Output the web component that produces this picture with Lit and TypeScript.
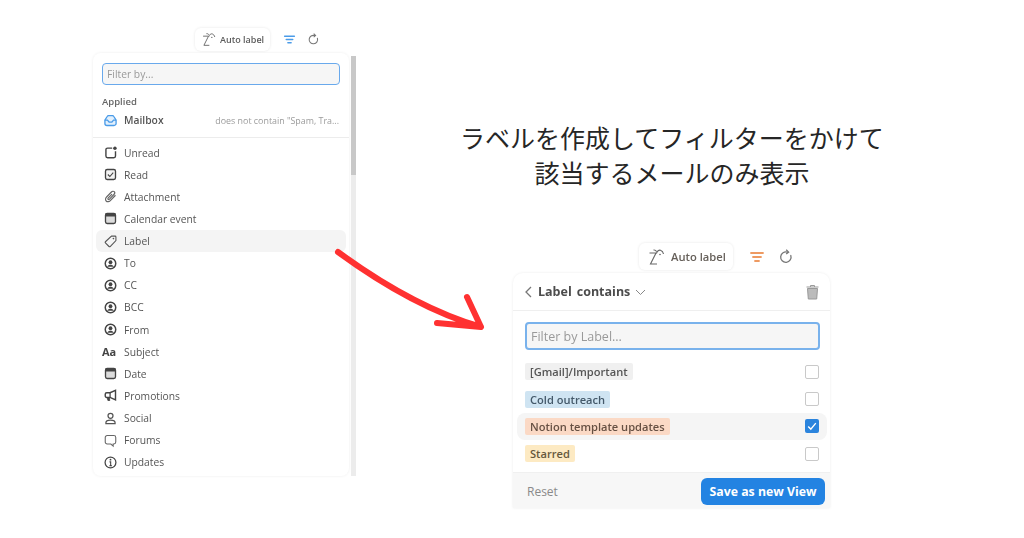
import { LitElement, css, html, svg } from "lit";
import { customElement } from "lit/decorators.js";

const icons: Record<string, any> = {
  unread: svg`<path d="M11 3.700H5.500a2 2 0 0 0-2 2v7.500a2 2 0 0 0 2 2H13a2 2 0 0 0 2-2V7.500" fill="none" stroke="#444" stroke-width="1.700"/><circle cx="14.300" cy="3.800" r="2.100" fill="#444"/>`,
  read: svg`<rect x="3" y="3" width="12" height="12" rx="2" fill="#f4f4f4" stroke="#444" stroke-width="1.600"/><path d="M5.800 9l2.400 2.400L12.300 6.800" fill="none" stroke="#444" stroke-width="1.300"/>`,
  clip: svg`<path d="M15 7.500l-6.200 6.400c-1.600 1.600-3.800 1.700-5 .5-1.200-1.200-1-3.300.5-4.800l5.800-6c1.100-1.100 2.600-1.200 3.400-.4.900.9.700 2.300-.4 3.400l-5.300 5.500c-.6.600-1.300.7-1.700.3-.4-.4-.3-1.100.3-1.700l4.400-4.600" fill="none" stroke="#666" stroke-width="1.400"/>`,
  calendar: svg`<rect x="3" y="3" width="12" height="12" rx="2" fill="#dcdcdc" stroke="#444" stroke-width="1.600"/><rect x="3" y="3" width="12" height="3.600" fill="#444"/>`,
  tag: svg`<path d="M10.200 2.500h4.300a1 1 0 0 1 1 1v4.300L8.600 15a1 1 0 0 1-1.400 0l-4.300-4.300a1 1 0 0 1 0-1.400z" fill="none" stroke="#555" stroke-width="1.300"/><circle cx="12.500" cy="5.500" r="1" fill="#555"/>`,
  person: svg`<circle cx="9" cy="9" r="6.300" fill="none" stroke="#444" stroke-width="1.800"/><circle cx="9" cy="7.500" r="2.300" fill="#444"/><path d="M4.800 13c1-2 2.500-2.600 4.200-2.600s3.200.6 4.200 2.600z" fill="#444"/>`,
  promo: svg`<path d="M15 2.800v11.400L8.500 11.300H4.500A1.800 1.800 0 0 1 2.700 9.500v-2A1.800 1.800 0 0 1 4.500 5.700h4z" fill="none" stroke="#444" stroke-width="1.700"/><path d="M8.500 5.700v5.600" stroke="#444" stroke-width="1.500"/><path d="M5 11.300l.9 3.700h2.200l-.6-3.700" fill="#444" stroke="#444" stroke-width="1"/>`,
  social: svg`<circle cx="9" cy="5.800" r="3" fill="none" stroke="#555" stroke-width="1.500"/><path d="M3.500 15.200v-1c0-2 2.200-3.200 5.500-3.200s5.500 1.200 5.500 3.200v1z" fill="none" stroke="#555" stroke-width="1.500"/>`,
  forum: svg`<path d="M5 3h8a2.300 2.300 0 0 1 2.300 2.300v5.600a2.300 2.300 0 0 1-2.300 2.300h-.8v2.500L9.400 13.200H5a2.300 2.300 0 0 1-2.300-2.300V5.300A2.300 2.300 0 0 1 5 3z" fill="none" stroke="#666" stroke-width="1.300"/>`,
  info: svg`<circle cx="9" cy="9" r="6.500" fill="none" stroke="#444" stroke-width="1.500"/><path d="M7.800 8.200H9.200v4.600M7.600 12.800h3.200" fill="none" stroke="#444" stroke-width="1.300"/><circle cx="9" cy="5.600" r="1.100" fill="#444"/>`,
  mail: svg`<path d="M2.300 8.500L5 4.200A2 2 0 0 1 6.700 3.200h4.600A2 2 0 0 1 13 4.200l2.700 4.300v4a2.500 2.500 0 0 1-2.500 2.500H4.800a2.500 2.500 0 0 1-2.500-2.500z" fill="#e3f0fc" stroke="#4a9be8" stroke-width="1.600" stroke-linejoin="round"/><path d="M2.300 8.500h3l2 2.300h3.400l2-2.300h3" fill="none" stroke="#4a9be8" stroke-width="1.500"/>`,
};

const filters = [
  { icon: "unread", name: "Unread" },
  { icon: "read", name: "Read" },
  { icon: "clip", name: "Attachment" },
  { icon: "calendar", name: "Calendar event" },
  { icon: "tag", name: "Label", hover: true },
  { icon: "person", name: "To" },
  { icon: "person", name: "CC" },
  { icon: "person", name: "BCC" },
  { icon: "person", name: "From" },
  { icon: "aa", name: "Subject" },
  { icon: "calendar", name: "Date" },
  { icon: "promo", name: "Promotions" },
  { icon: "social", name: "Social" },
  { icon: "forum", name: "Forums" },
  { icon: "info", name: "Updates" },
];

const labels = [
  { name: "[Gmail]/Important", cls: "grey", checked: false },
  { name: "Cold outreach", cls: "blue", checked: false },
  { name: "Notion template updates", cls: "orange", checked: true },
  { name: "Starred", cls: "yellow", checked: false },
];

function toolbar(color: string, big: boolean) {
  return html`
    <div class="toolbar ${big ? "big" : ""}">
      <div class="auto">
        <svg class="palm" viewBox="0 0 18 18">
          <path d="M2.500 5h6.500L3.500 16h6.500" fill="none" stroke="#666" stroke-width="1.100"/>
          <path d="M9.500 5.500C10 3 12 1.800 13.500 2.300c1.500.5 2.700 2 3 3.700M9.500 3.500C9 2.500 8 1.800 6.500 2" fill="none" stroke="#666" stroke-width="1.100"/>
          <circle cx="13" cy="6.500" r=".8" fill="#666"/>
        </svg>
        <span>Auto label</span>
      </div>
      <svg class="tool first" viewBox="0 0 16 16">
        <path d="M2 4h12M4 8h8M6 12h4" fill="none" stroke=${color} stroke-width="1.800" stroke-linecap="round"/>
      </svg>
      <svg class="tool" viewBox="0 0 16 16">
        <path d="M12.800 6.500A5.200 5.200 0 1 1 9.500 3.200" fill="none" stroke="#777" stroke-width="1.300" stroke-linecap="round"/>
        <path d="M8.200 .8l2.400 2.300-2.400 2" fill="none" stroke="#777" stroke-width="1.300"/>
      </svg>
    </div>
  `;
}

@customElement("app-root")
export class AppRoot extends LitElement {
  static styles = css`
    :host {
      display: block;
      position: relative;
      width: 1024px;
      height: 538px;
      overflow: hidden;
      background: #fff;
      font-family: "Open Sans", "Noto Sans", sans-serif;
    }
    .shot {
      position: absolute;
      filter: blur(0.45px);
    }
    .shot-left {
      left: 93px;
      top: 28px;
      width: 263px;
    }
    .shot-right {
      left: 513px;
      top: 243px;
      width: 317px;
    }
    .toolbar {
      display: flex;
      align-items: center;
      height: 23px;
      margin-left: 102px;
    }
    .toolbar.big {
      height: 27px;
      margin-left: 126px;
    }
    .auto {
      display: flex;
      align-items: center;
      gap: 4px;
      width: 75px;
      height: 100%;
      padding-left: 6px;
      box-sizing: border-box;
      border-radius: 6px;
      box-shadow: 0 0 3px rgba(0, 0, 0, 0.1);
      background: #fff;
      color: #5c5c5c;
      font-size: 9px;
      font-weight: 600;
    }
    .big .auto {
      width: 94px;
      padding-left: 8px;
      gap: 6px;
      font-size: 11.200px;
      color: #66605a;
    }
    .palm {
      width: 15px;
      height: 15px;
      flex: none;
    }
    .big .palm {
      width: 18px;
      height: 18px;
    }
    .tool {
      width: 13px;
      height: 13px;
      margin-left: 11px;
    }
    .tool.first {
      margin-left: 13px;
    }
    .big .tool {
      width: 16px;
      height: 16px;
      margin-left: 13px;
    }
    .big .tool.first {
      margin-left: 16px;
    }
    .listwrap {
      display: flex;
      margin-top: 2px;
      gap: 2px;
    }
    .card {
      width: 256px;
      height: 423px;
      box-sizing: border-box;
      padding-top: 10px;
      border-radius: 8px;
      background: #fff;
      box-shadow: 0 0 3px rgba(0, 0, 0, 0.08);
      overflow: hidden;
    }
    .scroll {
      width: 5px;
      height: 420px;
      margin-top: 3px;
      background: #ececec;
    }
    .thumb {
      height: 119px;
      background: #c8c8c8;
    }
    .input {
      display: flex;
      align-items: center;
      box-sizing: border-box;
      border: 1.500px solid #69a9ec;
      border-radius: 4px;
      background: #f6f6f6;
      color: #9a9a9a;
    }
    .card .input {
      width: 238px;
      height: 22px;
      margin-left: 9px;
      padding-left: 4px;
      font-size: 10.300px;
    }
    .applied {
      margin: 11px 0 0 9px;
      height: 12px;
      line-height: 12px;
      font-size: 9.500px;
      font-weight: 600;
      color: #666;
    }
    .row {
      display: flex;
      align-items: center;
      height: 22.140px;
      margin: 0 3px;
      padding: 0 7px;
      border-radius: 6px;
      color: #555;
      font-size: 10.300px;
    }
    .row.hover {
      background: #f4f4f4;
    }
    .row svg,
    .aa {
      flex: none;
      width: 15px;
      height: 15px;
      margin-right: 6px;
    }
    .aa {
      width: 22px;
      margin-left: -1px;
      margin-right: 0;
      line-height: 15px;
      color: #444;
      font-size: 11px;
      font-weight: 700;
    }
    .mailbox {
      height: 24px;
    }
    .mailbox b {
      font-weight: 600;
    }
    .note {
      margin-left: auto;
      color: #9b9b9b;
      font-size: 8.900px;
    }
    .rule {
      height: 1px;
      margin: 4.500px 0 4px;
      background: #ececec;
    }
    .panel {
      margin-top: 3px;
      height: 235px;
      border-radius: 10px 10px 0 0;
      box-shadow: 0 0 3px rgba(0, 0, 0, 0.08);
      overflow: hidden;
      display: flex;
      flex-direction: column;
      background: #fff;
    }
    .head {
      display: flex;
      align-items: center;
      flex: none;
      height: 37px;
      padding: 0 10px 0 11px;
      border-bottom: 1px solid #efefef;
      font-size: 12.500px;
      font-weight: 700;
      color: #4c4c4c;
    }
    .head .back {
      width: 9px;
      height: 12px;
      margin-right: 5px;
    }
    .head .word {
      margin-right: 5px;
    }
    .head .chev {
      width: 11px;
      height: 8px;
    }
    .head .bin {
      width: 15px;
      height: 16px;
      margin-left: auto;
    }
    .panel .input {
      flex: none;
      width: 295px;
      height: 28px;
      margin: 11px 0 8px 12px;
      padding-left: 4px;
      font-size: 12.500px;
      border-width: 2px;
      border-color: #79b2ec;
    }
    .opt {
      display: flex;
      align-items: center;
      flex: none;
      height: 27.400px;
      margin: 0 3px 0 4px;
      padding: 0 8px;
      border-radius: 8px;
    }
    .opt.on {
      background: #f5f5f5;
    }
    .chip {
      height: 17px;
      line-height: 17px;
      padding: 0 5px;
      border-radius: 2px;
      font-size: 11.100px;
      font-weight: 600;
    }
    .grey { background: #f0f0f0; color: #555; }
    .blue { background: #cfe4f2; color: #44596a; }
    .orange { background: #fbd9c5; color: #665043; }
    .yellow { background: #fdeac3; color: #66583c; }
    .box {
      display: flex;
      margin-left: auto;
      width: 14px;
      height: 14px;
      box-sizing: border-box;
      border: 1.500px solid #c9c9c9;
      border-radius: 2px;
      background: #fff;
    }
    .box.on {
      border: none;
      background: #2b84dd;
    }
    .foot {
      display: flex;
      align-items: center;
      justify-content: space-between;
      flex: 1;
      margin-top: 4px;
      padding: 2px 5px 0 14px;
      background: #f7f7f7;
      border-top: 1px solid #f0f0f0;
      color: #8a8a8a;
      font-size: 12px;
    }
    .save {
      display: flex;
      align-items: center;
      justify-content: center;
      width: 124px;
      height: 27px;
      border-radius: 6px;
      background: #2383e2;
      color: #fff;
      font-size: 12.300px;
      font-weight: 700;
    }
    .title {
      position: absolute;
      left: 422px;
      top: 120px;
      width: 500px;
      text-align: center;
      font-family: "Noto Sans CJK JP", sans-serif;
      font-size: 25px;
      line-height: 35px;
      color: #262626;
      white-space: nowrap;
    }
    .arrow {
      position: absolute;
      left: 330px;
      top: 240px;
      width: 170px;
      height: 110px;
    }
  `;

  render() {
    return html`
      <div class="shot shot-left">
        ${toolbar("#4a9be8", false)}
        <div class="listwrap">
          <div class="card">
            <div class="input">Filter by...</div>
            <div class="applied">Applied</div>
            <div class="row mailbox">
              <svg viewBox="0 0 18 18">${icons.mail}</svg>
              <b>Mailbox</b>
              <span class="note">does not contain "Spam, Tra...</span>
            </div>
            <div class="rule"></div>
            ${filters.map(
              (f) => html`
                <div class="row ${f.hover ? "hover" : ""}">
                  ${f.icon === "aa"
                    ? html`<span class="aa">Aa</span>`
                    : html`<svg viewBox="0 0 18 18">${icons[f.icon]}</svg>`}
                  ${f.name}
                </div>
              `
            )}
          </div>
          <div class="scroll"><div class="thumb"></div></div>
        </div>
      </div>

      <div class="title">ラベルを作成してフィルターをかけて<br />該当するメールのみ表示</div>

      <svg class="arrow" viewBox="0 0 170 110">
        <path d="M8 12C60 50 110 75 151 87M137 57L151 87L107 83" fill="none" stroke="#ff3131" stroke-width="6" stroke-linecap="round" stroke-linejoin="round"/>
      </svg>

      <div class="shot shot-right">
        ${toolbar("#ee9a62", true)}
        <div class="panel">
          <div class="head">
            <svg class="back" viewBox="0 0 9 12"><path d="M7 1L2 6l5 5" fill="none" stroke="#777" stroke-width="1.300"/></svg>
            <span class="word">Label</span><span class="word">contains</span>
            <svg class="chev" viewBox="0 0 11 8"><path d="M1 2l4.500 4.500L10 2" fill="none" stroke="#888" stroke-width="1"/></svg>
            <svg class="bin" viewBox="0 0 15 16">
              <path d="M2.500 4.500h10l-.8 10.500H3.300z" fill="#bbb" stroke="#999" stroke-width="1"/>
              <path d="M1.500 3h12M5.500 3V1.500h4V3" fill="none" stroke="#999" stroke-width="1"/>
            </svg>
          </div>
          <div class="input">Filter by Label...</div>
          ${labels.map(
            (l) => html`
              <div class="opt ${l.checked ? "on" : ""}">
                <span class="chip ${l.cls}">${l.name}</span>
                <span class="box ${l.checked ? "on" : ""}">
                  ${l.checked
                    ? html`<svg viewBox="0 0 14 14"><path d="M3.200 7.500l2.600 2.600 5-6" fill="none" stroke="#fff" stroke-width="1.400"/></svg>`
                    : ""}
                </span>
              </div>
            `
          )}
          <div class="foot">
            <span>Reset</span>
            <span class="save">Save as new View</span>
          </div>
        </div>
      </div>
    `;
  }
}
